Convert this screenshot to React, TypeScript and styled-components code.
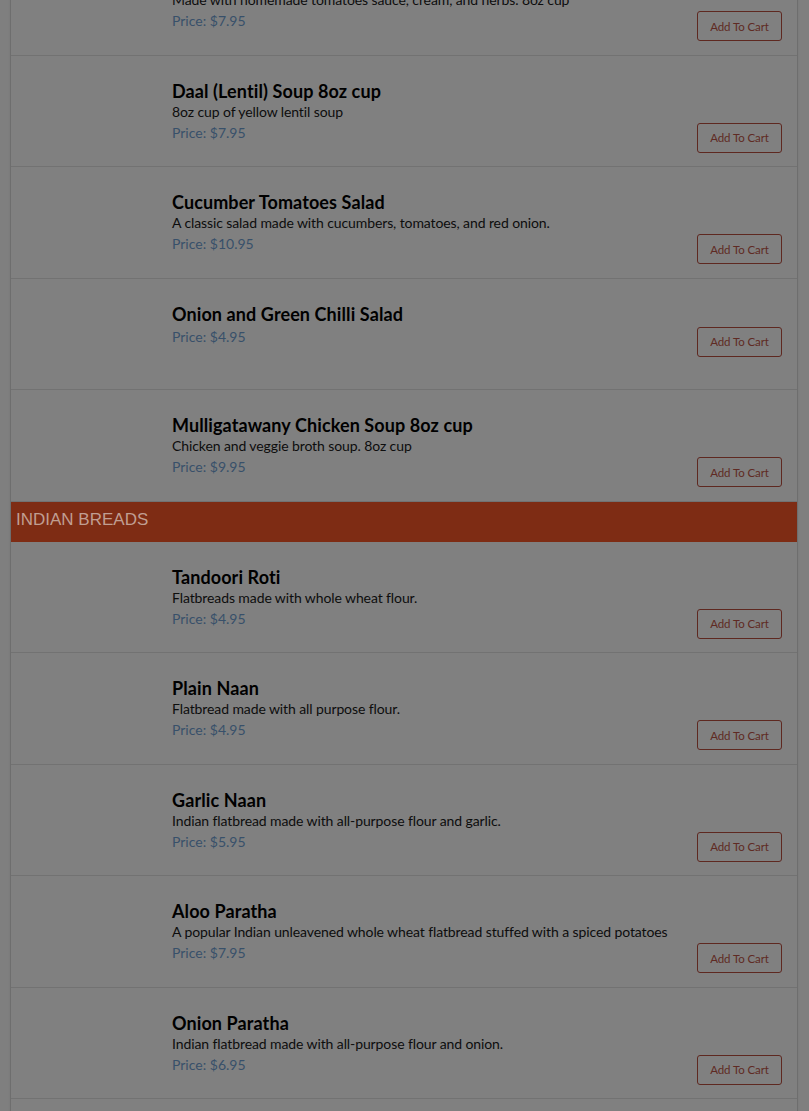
import React from "react";
import styled, { createGlobalStyle } from "styled-components";

const GlobalStyle = createGlobalStyle`
  html, body {
    margin: 0;
    padding: 0;
    background: #7f7f7f;
    font-family: Lato, "Noto Sans", sans-serif;
    overflow: hidden;
  }
`;

const Viewport = styled.div`
  margin-top: -56px;
`;

const Menu = styled.div`
  margin: 0 11px 0 10px;
  background: #808080;
  border-left: 1px solid #6e6e6e;
  border-right: 1px solid #6e6e6e;
  box-shadow: 0 0 2px rgba(0, 0, 0, 0.08);
`;

const CategoryHeader = styled.div`
  height: 40px;
  box-sizing: border-box;
  padding: 0 0 3px 5px;
  display: flex;
  align-items: center;
  background: #7e2c14;
  color: #c09e92;
  font-family: "Liberation Sans", Arial, sans-serif;
  font-size: 17px;
  text-transform: uppercase;
`;

const Row = styled.div`
  display: grid;
  grid-template-columns: 161px 1fr;
  min-height: 111.5px;
  box-sizing: border-box;
  padding: 24px 15px 13px 0;
  border-bottom: 1px solid #727272;
`;

const Thumb = styled.div``;

const Info = styled.div`
  display: flex;
  flex-direction: column;
`;

const Title = styled.div`
  font-size: 18px;
  line-height: 22px;
  font-weight: 700;
  color: #000;
  letter-spacing: 0.1px;
`;

const Desc = styled.div`
  font-size: 14px;
  line-height: 19px;
  color: #0d0d0d;
  letter-spacing: -0.1px;
`;

const PriceRow = styled.div`
  margin-top: 2px;
  display: flex;
  justify-content: space-between;
  align-items: flex-start;
`;

const Price = styled.div`
  font-size: 14px;
  line-height: 20px;
  color: #38506a;
`;

const CartButton = styled.button`
  width: 85px;
  height: 30px;
  padding: 0;
  background: transparent;
  border: 1px solid #5e2820;
  border-radius: 3px;
  color: #5f2a23;
  font-family: Lato, "Noto Sans", sans-serif;
  font-size: 11.5px;
  letter-spacing: -0.1px;
  cursor: pointer;
`;

type Item = { name: string; desc?: string; price: string };

const sections: { title?: string; items: Item[] }[] = [
  {
    items: [
      {
        name: "Tomato Soup 8oz cup",
        desc: "Made with homemade tomatoes sauce, cream, and herbs. 8oz cup",
        price: "7.95",
      },
      { name: "Daal (Lentil) Soup 8oz cup", desc: "8oz cup of yellow lentil soup", price: "7.95" },
      {
        name: "Cucumber Tomatoes Salad",
        desc: "A classic salad made with cucumbers, tomatoes, and red onion.",
        price: "10.95",
      },
      { name: "Onion and Green Chilli Salad", price: "4.95" },
      {
        name: "Mulligatawany Chicken Soup 8oz cup",
        desc: "Chicken and veggie broth soup. 8oz cup",
        price: "9.95",
      },
    ],
  },
  {
    title: "Indian Breads",
    items: [
      { name: "Tandoori Roti", desc: "Flatbreads made with whole wheat flour.", price: "4.95" },
      { name: "Plain Naan", desc: "Flatbread made with all purpose flour.", price: "4.95" },
      {
        name: "Garlic Naan",
        desc: "Indian flatbread made with all-purpose flour and garlic.",
        price: "5.95",
      },
      {
        name: "Aloo Paratha",
        desc: "A popular Indian unleavened whole wheat flatbread stuffed with a spiced potatoes",
        price: "7.95",
      },
      {
        name: "Onion Paratha",
        desc: "Indian flatbread made with all-purpose flour and onion.",
        price: "6.95",
      },
      {
        name: "Paneer Paratha",
        desc: "Indian flatbread stuffed with spiced paneer.",
        price: "7.95",
      },
    ],
  },
];

export default function App() {
  return (
    <>
      <GlobalStyle />
      <Viewport>
        <Menu>
          {sections.map((s, si) => (
            <React.Fragment key={si}>
              {s.title && <CategoryHeader>{s.title}</CategoryHeader>}
              {s.items.map((it) => (
                <Row key={it.name}>
                  <Thumb />
                  <Info>
                    <Title>{it.name}</Title>
                    {it.desc && <Desc>{it.desc}</Desc>}
                    <PriceRow>
                      <Price>Price: ${it.price}</Price>
                      <CartButton>Add To Cart</CartButton>
                    </PriceRow>
                  </Info>
                </Row>
              ))}
            </React.Fragment>
          ))}
        </Menu>
      </Viewport>
    </>
  );
}
